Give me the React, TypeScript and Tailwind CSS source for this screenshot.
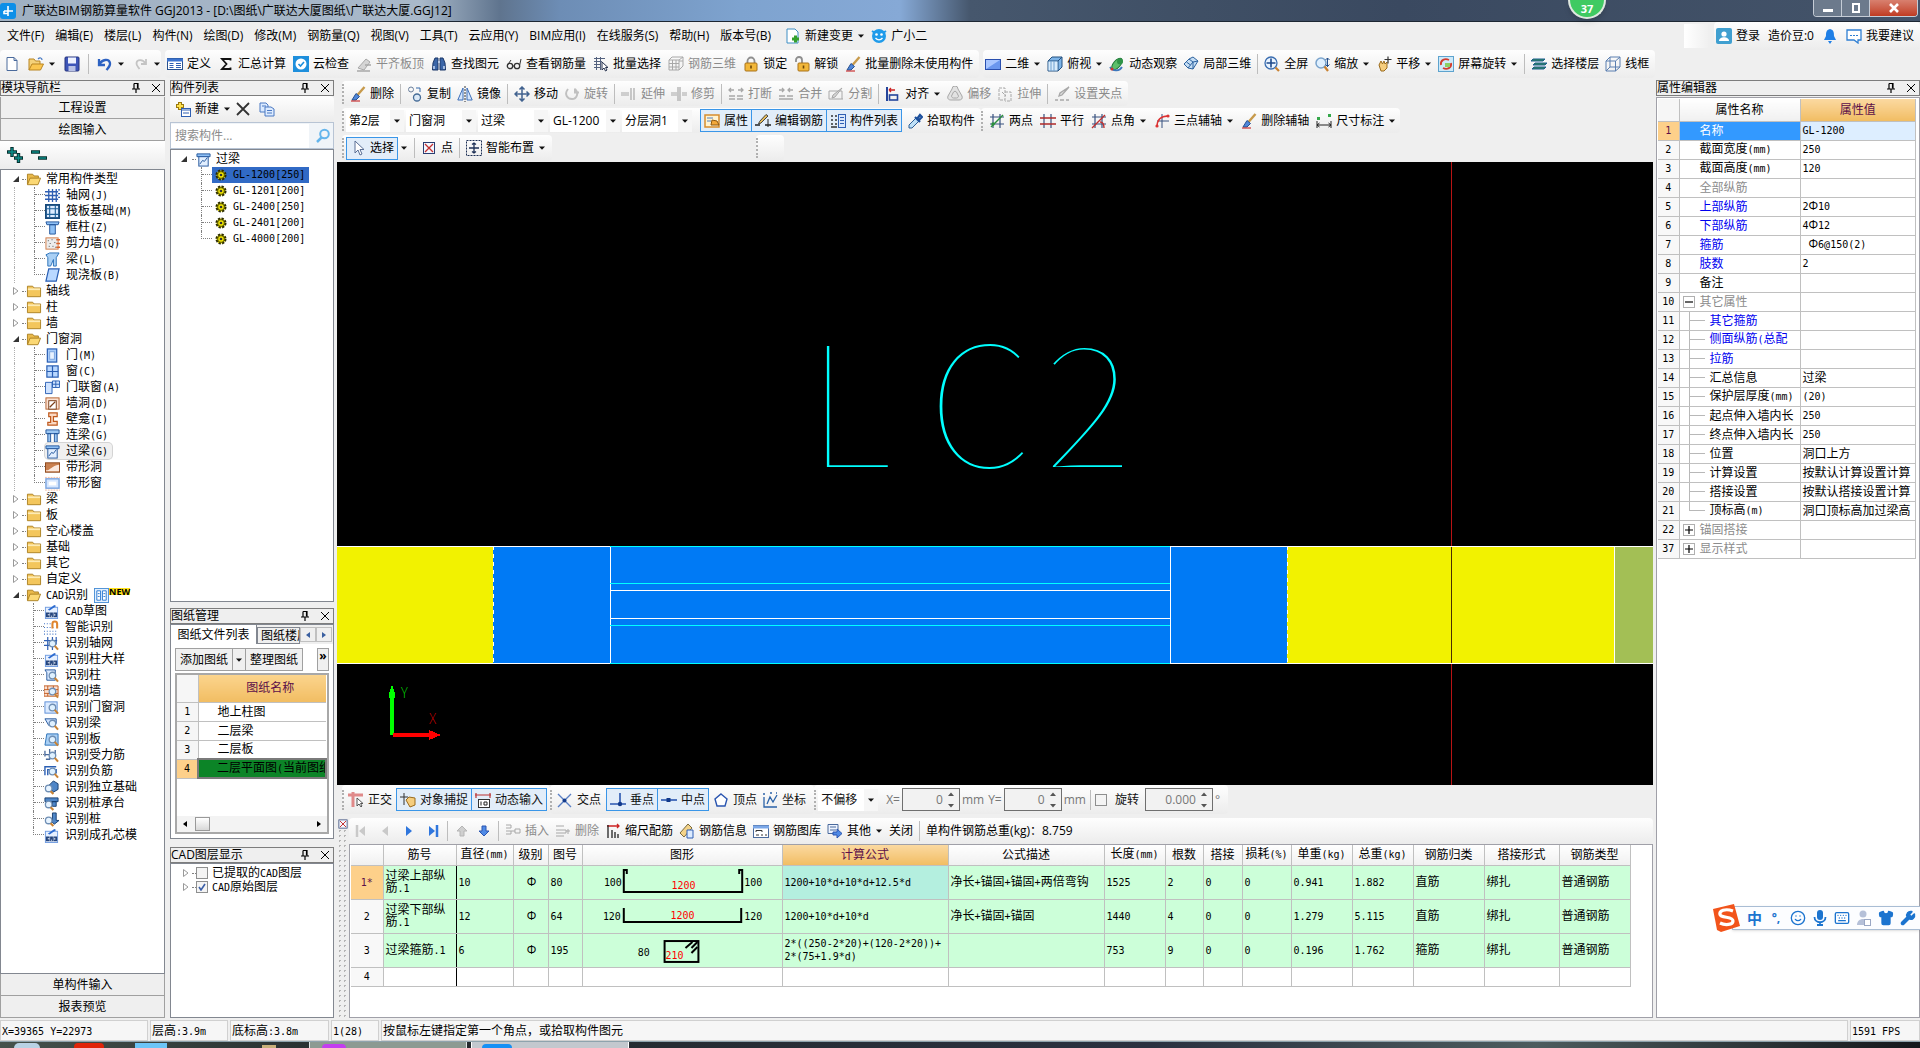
import type { ReactNode } from 'react';
import clsx from 'clsx';
import { Smile, Keyboard, Shirt, Wrench } from 'lucide-react';

const B = '#2f5fb3';
const G = '#a8a8a8';

const magnifier = (
  <>
    <circle cx="9" cy="8" r="3.5" fill="#dff1ff" stroke="#6f8fb5" strokeWidth="1.4" />
    <path d="M11.5 10.5l3.5 4" stroke="#c98232" strokeWidth="2.2" />
  </>
);
const brush = (
  <>
    <path d="M14.5 1L7.5 9" stroke="#c79a4b" strokeWidth="2.4" />
    <path d="M6 7.500l3.500 3L6 14H2z" fill="#4f86d8" stroke="#27508f" />
    <path d="M1 15h9" stroke="#c33" strokeWidth="1.2" />
  </>
);
const cadBadge = (
  <>
    <rect x="1.500" y="3.500" width="13" height="12" fill="#e6f0ff" stroke="#6f9be0" />
    <path d="M4 6l7-5 2 1-7 5z" fill="#2c6bd0" />
    <path d="M2 9h4v5H2zM6.500 9h3v5h-3zM10 9h4v5h-4z" fill="#24447c" />
    <path d="M4 11.500h2M7.500 13h1M11.500 10.500v2" stroke="#fff" />
  </>
);

// 16x16 drawings, keyed by command
const icons: Record<string, ReactNode> = {
  app: <><rect width="16" height="16" rx="3" fill="#0d8fe8" /><path d="M8 3v10M4 8h9M4 8v2.500h4" fill="none" stroke="#fff" strokeWidth="1.600" /></>,
  newdoc: <path d="M3 1.500h7l3 3v10H3zM10 1.500v3h3" fill="#fff" stroke="#4a6a9c" />,
  open: <><path d="M1 14V3h5l1.500 2H12v3" fill="#f5d27a" stroke="#b98522" /><path d="M1 14l3-6h11.500l-3 6z" fill="#fbc64f" stroke="#b98522" /><path d="M10 3c2-2 4-1 4 1" fill="none" stroke="#4b7cc4" strokeWidth="1.300" /></>,
  save: <><rect x="1" y="1" width="14" height="14" rx="1" fill="#3d55b8" stroke="#26357d" /><rect x="4" y="1.500" width="8" height="6" fill="#eef2ff" /><rect x="4.500" y="10" width="7" height="5" fill="#b9c2e6" /></>,
  undo: <path d="M2 3v6h6M2.500 8.500C5 3 12 2.500 13 7c.6 3-2 5-3.500 7" fill="none" stroke="#2d62c2" strokeWidth="2.300" />,
  redo: <path d="M13 3v5H8M12.500 7.500C10 3 4 3 3.500 7c-.3 3 2 4 3 6" fill="none" stroke="#c4c4c4" strokeWidth="1.800" />,
  define: <><rect x=".5" y="2.500" width="15" height="11" fill="#fff" stroke="#27508f" /><path d="M0 4h16" stroke="#3c73cf" strokeWidth="3" /><path d="M2.500 7.500h4M2.500 9.500h4M2.500 11.500h4M9 7.500h5M9 9.500h5M9 11.500h5" stroke={B} /></>,
  sigma: <path d="M12.500 4.500V3H4l4.500 5L4 13h8.500v-1.500" fill="none" stroke="#111" strokeWidth="1.800" />,
  cloud: <><rect width="16" height="16" fill="#1e8fdc" /><circle cx="8" cy="8" r="5.500" fill="#fff" /><path d="M5.500 8l2 2 3.500-4" fill="none" stroke="#1e8fdc" strokeWidth="1.600" /></>,
  levelTop: <><path d="M2 12l8-9 4 3-6 8z" fill="#d5d5d5" stroke={G} /><path d="M1 15h13M9 9h6" stroke={G} strokeWidth="1.500" /></>,
  find: <><path d="M2 7l2-5h3v12H1.500zM14 7l-2-5H9v12h5.500z" fill="#3b66a8" stroke="#1b3768" /><path d="M3 10v3M13 10v3M7 6h2" stroke="#c9dcf7" strokeWidth="1.500" /></>,
  glasses: <><circle cx="4" cy="10" r="2.700" fill="none" stroke="#333" strokeWidth="1.300" /><circle cx="11" cy="10" r="2.700" fill="none" stroke="#333" strokeWidth="1.300" /><path d="M6.500 10h2M1.500 9L5 4M13.700 9L15 3" stroke="#333" /></>,
  batch: <><path d="M1 2.500h11M1 5.500h8M1 8.500h7M1 11.500h7M3.500 1v13M7.500 1v13" stroke="#53617e" /><path d="M9 6v8l2-2 1.500 3 1.500-1-1.500-2.500H15z" fill="#fff" stroke="#26324e" /></>,
  rebar3d: <path d="M1 4h10v10H1zM4.500 4v10M8 4v10M1 7.500h10M1 11h10M1 4l3-3h11v9l-4 4M11 4l4-3M15 5H11" fill="none" stroke={G} />,
  lock: <><path d="M4.500 8V5a3.500 3.500 0 017 0v3" fill="none" stroke="#8e8e8e" strokeWidth="1.800" /><rect x="2" y="7" width="12" height="8" rx="1" fill="#f2b739" stroke="#a9731a" /><path d="M8 9.500v3" stroke="#6d4608" strokeWidth="1.600" /></>,
  unlock: <><path d="M2 6V4a3 3 0 016 0v4" fill="none" stroke="#8e8e8e" strokeWidth="1.800" /><rect x="4" y="7" width="11" height="8" rx="1" fill="#f2b739" stroke="#a9731a" /><path d="M9.500 9.500v3" stroke="#6d4608" strokeWidth="1.600" /></>,
  brush,
  flat: <><rect x=".5" y="3.500" width="15" height="10" fill="#a9c6ff" stroke="#2a4fae" /><path d="M1 13L15 4v9z" fill="#6b97ee" /></>,
  cube: <><path d="M1 5l4-4h10v10l-4 4H1z" fill="#7db4e8" stroke="#24507e" /><path d="M1 5h10v10M11 5l4-4" fill="none" stroke="#24507e" /><rect x="1.500" y="5.500" width="9" height="9" fill="#d9ecfc" /><path d="M4 5v10M7 5v10" stroke="#6fa0d0" /></>,
  orbit: <><ellipse cx="8" cy="8" rx="7" ry="3.500" transform="rotate(-50 8 8)" fill="#5cbf6a" stroke="#1c7436" /><circle cx="11" cy="5.500" r="3" fill="#2f9447" /><path d="M1 11c3 5 10 4 12 0" fill="none" stroke="#3c77bd" strokeWidth="1.700" /><circle cx="3" cy="13" r="1.600" fill="#c33" /></>,
  local3d: <path d="M1 8l5-5 4 3-5 6zM6 3l4-2 5 4-5 8-5-1M10 6l5-1M3.500 6l4 3M10 6v7" fill="#c5def5" stroke="#2d629e" />,
  full: <><circle cx="7" cy="7" r="6" fill="#eaf4ff" stroke="#3a6db0" strokeWidth="1.300" /><path d="M7 2.500v9M2.500 7h9" stroke="#1f4a8c" strokeWidth="1.600" /><path d="M11.500 11.500L15 15" stroke="#c98232" strokeWidth="2.200" /></>,
  zoom: <><circle cx="7" cy="7" r="5" fill="#dff0ff" stroke="#7aa3cc" strokeWidth="1.500" /><path d="M10.500 10.500L14 15" stroke="#c98232" strokeWidth="2.200" /><path d="M13.500 2v9M11.500 4l2-2 2 2M11.500 8.500l2 2 2-2" fill="none" stroke="#234f8c" /></>,
  pan: <><path d="M3 9l2-4 1.500 3L8 5l1 3 2-2v6l-3 3H5z" fill="#f5cd7e" stroke="#9a6a1c" /><path d="M12 .5v7M8.500 3.500h7" stroke="#333" strokeWidth="1.200" /></>,
  rotateView: <><rect x=".5" y=".5" width="15" height="15" fill="#cfe9f8" stroke="#5da3ce" /><path d="M3 9c-1-5 4-7 8-5M13 7c1 5-4 7-8 5" fill="none" stroke="#d33c2c" strokeWidth="1.800" /><rect x="7" y="7" width="5" height="4" fill="#8ccf63" /></>,
  floors: <><path d="M2 3h12l-2 2H0zM4 7h12l-2 2H2zM3 11h12l-2 2H1z" fill="#2f8a57" stroke="#1c5d91" /></>,
  wire: <path d="M1 5h9.500v10H1zM1 5l4-4h10v10l-4.500 4M10.500 5L15 1M5 1v10h10M5 11l-4 4" fill="none" stroke="#5a7eb0" />,
  copy: <><circle cx="4" cy="3.500" r="2.500" fill="none" stroke="#6a7f9c" /><circle cx="10" cy="11.500" r="3.500" fill="#dbe9f7" stroke="#456b96" strokeWidth="1.300" /><path d="M9 2h4v4" fill="none" stroke="#3568a8" /></>,
  mirror: <><path d="M6 2v12H.8zM10 2v12h5.200z" fill="#d3e5fb" stroke="#3d6eb8" /><path d="M8 0v16" stroke="#333" strokeDasharray="2 1" /></>,
  move: <path d="M8 1v14M1 8h14M5.500 3.500L8 1l2.500 2.500M5.500 12.500L8 15l2.500-2.500M3.500 5.500L1 8l2.500 2.500M12.500 5.500L15 8l-2.500 2.500" fill="none" stroke="#41628f" strokeWidth="1.500" />,
  rotate: <path d="M4 3c-4 5-1 10 4 10s7-6 3-10M11 2.500v4h4" fill="none" stroke="#c0c0c0" strokeWidth="2" />,
  extend: <path d="M0 7h8M0 9h8M10 2v12M13 2v12" stroke={G} strokeWidth="1.200" />,
  trim: <path d="M0 7h6M0 9h6M7 1v14M9 1v14M11 7h5M11 9h5" stroke={G} strokeWidth="1.200" />,
  breakAt: <path d="M1 4h5M3 2L1 4l2 2M10 4h5M13 2l2 2-2 2M1 10h6M9 10h6M1 13h6M9 13h6" fill="none" stroke={G} strokeWidth="1.300" />,
  merge: <path d="M1 4h5M4 2l2 2-2 2M10 4h5M12 2l-2 2 2 2M1 10h6M9 10h6M1 13h14" fill="none" stroke={G} strokeWidth="1.300" />,
  split: <><path d="M1 5h13M1 13h14M1 5v8M14 5v8" stroke={G} /><path d="M14 2L7 11l-3 1 1-3z" fill="#d6d6d6" stroke={G} /></>,
  align: <><path d="M2 1v14" stroke="#24459b" strokeWidth="2" /><path d="M4 4h6M4 4l2-2M4 4l2 2" stroke="#c22" fill="none" strokeWidth="1.300" /><rect x="4.500" y="9" width="8" height="5" fill="none" stroke="#24459b" strokeWidth="1.600" /></>,
  offset: <path d="M5 3a3 3 0 016 0l4 7c1 3-1 4-3 4H4c-2 0-4-1-3-4zM6.500 6a2 2 0 013 0l2 4c0 1-1 2-2 2h-3c-1 0-2-1-2-2z" fill="#e2e2e2" stroke={G} />,
  stretch: <path d="M2 2h6v12H2zM8 6h6v9H8M5 6l4 4" fill="none" stroke={G} strokeDasharray="3 1" />,
  grip: <path d="M15 1L8 9l-3 1 1-3zM1 14h3M6 14h4M12 14h3" fill="#ddd" stroke={G} strokeWidth="1.300" />,
  props: <><rect x="1" y="2" width="14" height="12" fill="#fff3d1" stroke="#d88d2e" strokeWidth="1.500" /><path d="M3 5h6M3 8h4" stroke="#557fc0" /><path d="M7 12l1-5 5 1 2 4z" fill="#f3a83b" stroke="#8e5710" /></>,
  pencil: <><path d="M0 12h5M10 12h6" stroke="#222" strokeWidth="1.500" /><path d="M13 3L6 10l-2.500 1 1-2.500L11 1.500z" fill="#e7bd5a" stroke="#444" /><path d="M13 6v8" stroke="#222" /></>,
  list: <><path d="M1 3h2M1 7h2M1 11h2M5 3h2M5 7h2M5 11h2M1 14h6" stroke="#333" strokeWidth="1.300" /><rect x="8.500" y="1.500" width="7" height="13" fill="#dbe8fb" stroke={B} /><path d="M10 4.500h4M10 7.500h4M10 10.500h4" stroke={B} /></>,
  picker: <><path d="M9 5l3 3-7 7H2v-3z" fill="#bfe0f7" stroke="#2d5f96" /><path d="M8 4l5 5M10 6l3-4 2 2-3 3" stroke="#1c4f9c" strokeWidth="2.200" fill="none" /></>,
  twoPoint: <><path d="M1 4h14M1 11h14M4 1v14M11 1v14" stroke="#37517f" strokeWidth="1.200" /><path d="M2 14L14 2" stroke="#2a8f3d" strokeWidth="1.500" /><circle cx="4" cy="11" r="1.700" fill="#2a8f3d" /></>,
  parallel: <><path d="M4 1v14M11 1v14" stroke="#37517f" strokeWidth="1.200" /><path d="M0 5h16M0 11h16" stroke="#b02a2a" strokeWidth="1.300" /></>,
  pointAngle: <><path d="M1 4h14M1 11h14M4 1v14M11 1v14" stroke="#37517f" strokeWidth="1.200" /><path d="M1 15L14 2M9 9c3 0 4 2 4 6" stroke="#c03030" fill="none" strokeWidth="1.400" /></>,
  threePoint: <><path d="M8 1v14M3 8h12" stroke="#37517f" /><path d="M3 14C3 7 7 3 14 3" fill="none" stroke="#d33" strokeWidth="1.500" /><circle cx="14" cy="3" r="1.600" fill="#d33" /><circle cx="3" cy="13" r="1.600" fill="#d33" /></>,
  dimension: <><path d="M1 8v7M15 8v7M1 12h14M3.500 10L1 12l2.500 2M12.500 10l2.500 2-2.500 2" fill="none" stroke="#222" /><path d="M1 4h3v3H1zM12 1h3v3h-3z" fill="#35a84a" /></>,
  cursor: <path d="M5 1v12l3-3 2 5 2-1-2-4.500h4z" fill="#fff" stroke="#5a6f95" />,
  point: <><rect x="2.500" y="2.500" width="11" height="11" fill="#f5f8ff" stroke="#2b3e72" /><path d="M4 4l8 8M12 4l-8 8" stroke="#c33030" strokeWidth="1.300" /></>,
  smart: <><rect x=".5" y=".5" width="15" height="15" fill="none" stroke="#1c2f55" strokeDasharray="2 1" /><path d="M8 3v10M3 8h10M6 4.500L8 3l2 1.500M6 11.500L8 13l2-1.500" fill="none" stroke="#1c2f55" strokeWidth="1.300" /></>,
  change: <><path d="M2 1h8l3 3v11H2z" fill="#fff" stroke="#3f8fc4" /><path d="M10.500 7.500v7M7 11h7" stroke="#33a02c" strokeWidth="3" /></>,
  robot: <><circle cx="8" cy="8" r="7" fill="#1f9bea" /><path d="M1 3l3 2M15 3l-3 2" stroke="#1f9bea" strokeWidth="2" /><circle cx="5.500" cy="6.500" r="1.300" fill="#fff" /><circle cx="10.500" cy="6.500" r="1.300" fill="#fff" /><path d="M4.500 10c2 2.500 5 2.500 7 0" fill="none" stroke="#fff" strokeWidth="1.300" /></>,
  user: <><rect width="16" height="16" rx="2" fill="#3f9fd0" /><circle cx="8" cy="6" r="2.600" fill="#fff" /><path d="M3 13c0-5 10-5 10 0z" fill="#fff" /></>,
  bell: <path d="M8 1c4 1 4 4 4 7l2 4H2l2-4c0-3 0-6 4-7zM6 13h4l-2 3z" fill="#1f7fe6" />,
  chat: <><path d="M1 2h14v10h-3v3l-4-3H1z" fill="#fff" stroke="#2f7fd3" strokeWidth="1.300" /><path d="M4 7.500h8" stroke="#2f7fd3" strokeDasharray="2 1" /></>,
  add: <><path d="M5 1v8M1 5h8" stroke="#9a7a10" strokeWidth="4" /><path d="M5 2v6M2 5h6" stroke="#ffe14d" strokeWidth="2" /><rect x="6.500" y="7.500" width="9" height="8" fill="#fff" stroke={B} /><path d="M7 9h8M8 12h6" stroke={B} /></>,
  del: <path d="M2 2l12 12M14 2L2 14" stroke="#333" strokeWidth="1.800" />,
  dup: <><path d="M1 2h6l2 2v7H1z" fill="#dcebff" stroke="#4b78c2" /><path d="M6 6h6l3 2v7H6z" fill="#dcebff" stroke="#4b78c2" /><path d="M8 9.500h5M8 12h5M3 5h4" stroke="#4b78c2" /></>,
  search: <><circle cx="9.500" cy="6" r="4.300" fill="none" stroke="#64b5ec" strokeWidth="2" /><path d="M6.500 9.500L2 14" stroke="#64b5ec" strokeWidth="2.500" /></>,
  plus2: <><path d="M5 0v10M0 5h10M11.500 6v10M7 11h9" stroke="#06302f" strokeWidth="3.400" /><path d="M5 1v8M1 5h8M11.500 7v8M8 11h7" stroke="#0b8a86" strokeWidth="1.600" /></>,
  minus2: <><path d="M0 5h9M7 11h9" stroke="#06302f" strokeWidth="3.400" /><path d="M1 5h7M8 11h7" stroke="#0b8a86" strokeWidth="1.600" /></>,
  folder: <><path d="M.5 14.500v-12h6l1.500 2h7.500v10z" fill="#f3c65c" stroke="#a77c1c" /><path d="M1 6h14" stroke="#fdebb5" strokeWidth="2" /></>,
  folderOpen: <><path d="M.5 14V2.500h6L8 4.500h5V7" fill="#e9b94a" stroke="#a77c1c" /><path d="M.5 14.500l3-7.500h12l-3 7.500z" fill="#fbd874" stroke="#a77c1c" /></>,
  axisNet: <path d="M0 4h14M0 8h14M0 12h14M4 1v14M8 1v14M12 1v14M14 2h2M14 6h2M14 10h2" stroke={B} strokeWidth="1.400" />,
  raft: <><rect x="1" y="1" width="14" height="14" fill="#dcebff" stroke="#174a7c" strokeWidth="2" /><path d="M5 1v14M11 1v14M1 5h14M1 11h14" stroke="#1e6098" strokeWidth="1.200" /></>,
  column: <path d="M1 2h14l-1 3H2zM5 5h6v10H5z" fill="#8ec0f5" stroke="#22559c" />,
  shear: <><rect x="1" y="2" width="13" height="12" fill="#ececec" stroke="#d07a45" /><path d="M3 5h1M7 4h1M5 8h1M10 7h1M4 11h1M8 11h1M11 12h1" stroke="#444" /><path d="M12 4h4M12 8h4M12 12h4" stroke="#d9622a" strokeWidth="1.500" /></>,
  beam: <path d="M1 3l4-2h10l-3 5v9H9V8l-3 7H3V6z" fill="#a9d0f5" stroke="#2a70b8" />,
  slab: <path d="M4 1h11l-3 13H1z" fill="#b9d8ff" stroke="#2a5fb4" strokeWidth="1.300" />,
  door: <><rect x="2.500" y="1" width="10" height="14" fill="#a9cdfa" stroke="#2a5fb4" strokeWidth="1.300" /><rect x="5" y="4" width="5" height="8" fill="#e8f2ff" stroke="#7ba4df" /></>,
  window: <><rect x="2" y="2" width="12" height="12" fill="#b9d8ff" stroke="#2a5fb4" strokeWidth="1.300" /><path d="M8 2v12M2 8h12" stroke="#2a5fb4" strokeWidth="1.300" /></>,
  doorWindow: <path d="M.5 2.500h7v12h-7zM8 1h7.500v7H8zM11.500 1v7M8 4.500h7.500" fill="#cfe3ff" stroke="#2a5fb4" />,
  hole: <><rect x="1" y="2" width="14" height="12" fill="#fbe1d2" stroke="#b3602d" /><rect x="4" y="5" width="8" height="9" fill="#fff" stroke="#7a3c16" /><path d="M5 12l6-6" stroke="#7a3c16" strokeWidth="1.400" /></>,
  niche: <path d="M4 1h9v4H9v5h4v4H3v-3h3V5H4z" fill="#fbd9c4" stroke="#c05a1e" strokeWidth="1.300" />,
  link: <path d="M1 2h14v4H1zM3 6h3v9H3zM10 6h3v9h-3z" fill="#9cc7f3" stroke="#22559c" />,
  lintel: <><path d="M1 2h14v3H1z" fill="#8ec0f5" stroke="#22559c" /><rect x="3" y="5" width="10" height="10" fill="#e2efff" stroke="#22559c" /><path d="M4 13l3-4 2 1 3-4" fill="none" stroke="#22559c" /></>,
  stripHole: <><rect x=".5" y="3" width="15" height="10" fill="#c9804f" stroke="#8a4316" /><path d="M1 11c5 0 6-5 14-6v7H1z" fill="#fbe9de" /></>,
  stripWin: <><rect x="1" y="3" width="14" height="10" fill="#d5e6ff" stroke="#7ba4df" strokeWidth="1.500" /><rect x="4" y="6" width="8" height="4" fill="#fff" /><path d="M0 1.500h16M0 15h16" stroke="#f0b9a0" strokeDasharray="2 1" /></>,
  cad: cadBadge,
  magnet: <><path d="M0 4h8M0 8h12M0 12h14M0 15h14" stroke="#3b6fc4" strokeDasharray="1 2" strokeWidth="1.300" /><path d="M9 9V4a2.500 2.500 0 015 0v5" fill="none" stroke="#e0862e" strokeWidth="2.200" /></>,
  idAxis: <><path d="M0 5h14M0 10h12M4 1v14M9 1v14M13 1v8" stroke={B} strokeWidth="1.300" />{magnifier}</>,
  idCol: <><path d="M1 2h11v11H3V5z" fill="#dcebff" stroke="#22559c" />{magnifier}</>,
  idWall: <><path d="M0 2h15v11H0zM0 6h15M0 10h15M4 2v4M10 2v4M4 10v3" fill="#fbe1d2" stroke="#c05a1e" />{magnifier}</>,
  idDoor: <><rect x="1" y="2" width="13" height="12" fill="#dcebff" stroke="#5a8bd6" />{magnifier}</>,
  idBeam: <><path d="M1 3h12v5L5 10z" fill="#cfe3ff" stroke="#22559c" />{magnifier}</>,
  idSlab: <><path d="M3 2h12v12H1z" fill="#a9d0f5" stroke="#2a70b8" />{magnifier}</>,
  idRebar: <><path d="M1 7h11M1 3v6M12 2v6M6 1v11H2" fill="none" stroke="#4a6a9c" strokeWidth="1.400" />{magnifier}</>,
  idNeg: <><path d="M1 12V3h12M4 12V6h9v4" fill="none" stroke="#2a5fb4" strokeWidth="1.500" />{magnifier}</>,
  idFound: <><path d="M5 6l5-5 5 3v6l-5 3z" fill="#4f86c8" stroke="#173f70" /><circle cx="5" cy="9" r="3.500" fill="#e8f4ff" stroke="#6f8fb5" strokeWidth="1.400" /><path d="M7 12l3 3" stroke="#c98232" strokeWidth="2.200" /></>,
  idCap: <><path d="M1 2h14v4H1zM9 6h4v5H9z" fill="#4f86c8" stroke="#173f70" /><circle cx="5" cy="9" r="3.500" fill="#e8f4ff" stroke="#6f8fb5" strokeWidth="1.400" /><path d="M7 12l3 3" stroke="#c98232" strokeWidth="2.200" /></>,
  idPile: <><path d="M9 1h4v8h3l-5 4-4-4h2z" fill="#4f86c8" stroke="#173f70" /><circle cx="5" cy="9" r="3.500" fill="#e8f4ff" stroke="#6f8fb5" strokeWidth="1.400" /><path d="M7 12l3 3" stroke="#c98232" strokeWidth="2.200" /></>,
  gear: <><circle cx="8" cy="8" r="6" fill="#f5e900" stroke="#2b2b00" strokeWidth="2.800" strokeDasharray="3 1.700" /><circle cx="8" cy="8" r="4.500" fill="#f5e900" stroke="#2b2b00" /><circle cx="8" cy="8" r="1.800" fill="#333" /></>,
  ortho: <><path d="M0 3h15M5 0v15" stroke="#e08a8a" strokeWidth="3" /><path d="M9 6v8l2-2 2 3 1-1-1.500-2.500H15z" fill="#fff" stroke="#555" /></>,
  snap: <><path d="M0 5h8M4 1v12" stroke="#333" /><path d="M6 8l3-3 6 1v7l-5 2z" fill="#f5cd7e" stroke="#9a6a1c" /></>,
  dynInput: <><path d="M0 3h16M1 1v5M15 1v5" stroke="#b33" strokeWidth="1.200" /><rect x="3.500" y="7.500" width="11" height="8" fill="#fff" stroke="#333" /><path d="M6 9.500v4M9 10h3v3H9z" fill="none" stroke="#222" /></>,
  cross: <><path d="M1 2l13 13M14 2L1 15" stroke="#5a7fc4" strokeWidth="1.400" /><circle cx="7.500" cy="8.500" r="2" fill="#123a8c" /></>,
  perp: <><path d="M0 12h16M10 1v11" stroke="#2a55b0" strokeWidth="1.600" /><circle cx="10" cy="12" r="2.200" fill="#123a8c" /></>,
  mid: <><path d="M0 8h16" stroke="#2a55b0" strokeWidth="1.600" /><rect x="5.500" y="6" width="4" height="4" fill="#123a8c" /></>,
  vertex: <path d="M8 2l6 5-2 7H4L2 7z" fill="#fff" stroke="#2a55b0" strokeWidth="1.400" />,
  coord: <path d="M2 5v10h13M5 12l3-7 3 5 4-7M1 2h2M8 1h2M14 1h1" fill="none" stroke="#2a62a8" strokeWidth="1.300" />,
  last: <><path d="M4 3l6 5-6 5z" fill="#2f76dd" /><path d="M12 2v12" stroke="#2f76dd" strokeWidth="2.500" /></>,
  firstG: <><path d="M12 3L6 8l6 5z" fill="#c9c9c9" /><path d="M4 2v12" stroke="#c9c9c9" strokeWidth="2.500" /></>,
  prevG: <path d="M11 3L5 8l6 5z" fill="#c9c9c9" />,
  next: <path d="M5 3l6 5-6 5z" fill="#2f76dd" />,
  upG: <path d="M8 3l5 5h-3v5H6V8H3z" fill="#cfcfcf" stroke="#b5b5b5" />,
  down: <path d="M8 13l5-5h-3V3H6v5H3z" fill="#4f8ae6" stroke="#2a55b0" />,
  insert: <path d="M1 2h5v3H1M1 8h5v3H1M6 8h4M10 6h5v4h-5z" fill="none" stroke={G} />,
  remove: <path d="M1 3h8M1 7h10v3H1M1 13h8M11 8h4M13 6v5" fill="none" stroke={G} />,
  scaleBar: <><path d="M2 3h12M12 1l2 2-2 2" fill="none" stroke="#c22" strokeWidth="1.300" /><path d="M3 2v13M7 7v8M10 9v6M13 11v4" stroke="#222" strokeWidth="1.300" /></>,
  info: <><path d="M1 10L9 1l4 4-8 9z" fill="#f3d38a" stroke="#7a6a3c" /><path d="M8 7h6v8H8z" fill="#dcebff" stroke={B} /></>,
  library: <><rect x=".5" y="2.500" width="15" height="12" fill="#fff" stroke="#4a6a9c" /><path d="M0 4h16" stroke="#7aa7e8" strokeWidth="3" /><path d="M3 9V7.500h6V9M3 12h3M8 12h2M12 12h2" fill="none" stroke="#333" /></>,
  other: <><path d="M1 1.500h10v9H1zM3 4h6M3 7h6" fill="#eef4ff" stroke="#4a6a9c" /><path d="M6 9h4V6l5 4.500-5 4.500v-3H6z" fill="#4f8ae6" stroke="#2a55b0" /></>,
};

function Icon({ name, className = 'size-4' }: { name: string; className?: string }) {
  return (
    <svg viewBox="0 0 16 16" className={clsx('shrink-0', className)} aria-hidden="true">
      {icons[name]}
    </svg>
  );
}

const Caret = () => (
  <svg viewBox="0 0 8 8" className="size-2 shrink-0" aria-hidden="true">
    <path d="M1 2.500h6L4 5.800z" fill="#111" />
  </svg>
);

const Sep = () => <span className="h-5 w-px shrink-0 bg-[#bdbdbd]" />;
const Grip = () => <span className="h-5 w-0 shrink-0 border-l-2 border-dotted border-[#b0b0b0]" />;

// Latin runs are set in a half-width mono face, next to full-width CJK
function Mixed({ text }: { text: string }) {
  return (
    <>
      {text.split(/([\x20-\x7e]+)/).map((part, i) =>
        i % 2 ? (
          <span key={i} className="font-['DejaVu_Sans_Mono',monospace] text-[10px]">{part}</span>
        ) : (
          part
        )
      )}
    </>
  );
}

interface ToolProps {
  icon: string;
  label?: string;
  menu?: boolean;
  disabled?: boolean;
  active?: boolean;
}

function Tool({ icon, label, menu, disabled, active }: ToolProps) {
  return (
    <button
      disabled={disabled}
      aria-label={label ?? icon}
      className={clsx(
        'flex shrink-0 items-center gap-1 whitespace-nowrap',
        disabled && 'text-[#8b8b8b]',
        active && 'h-[23px] border border-[#3a96e8] bg-[#e2edf9] px-[3px]'
      )}
    >
      <Icon name={icon} />
      {label && <span>{label}</span>}
      {menu && <Caret />}
    </button>
  );
}

const Bar = ({ className, children }: { className?: string; children: ReactNode }) => (
  <div className={clsx('flex shrink-0 items-center self-stretch rounded-sm bg-linear-to-b from-[#fefefe] to-[#ececec]', className)}>
    {children}
  </div>
);

function Combo({ value, label, className }: { value: string; label: string; className: string }) {
  return (
    <div className={clsx('flex h-[22px] shrink-0 items-center bg-white pl-[3px]', className)}>
      <select aria-label={label} className="min-w-0 flex-1 appearance-none bg-transparent">
        <option>{value}</option>
      </select>
      <span className="flex h-full w-[14px] items-center justify-center bg-[#f6f6f6]">
        <Caret />
      </span>
    </div>
  );
}

function Spin({ label, value, className }: { label: string; value: string; className: string }) {
  return (
    <span className={clsx('flex h-[23px] items-center border border-[#6f6f6f] bg-[#f2f2f2]', className)}>
      <input aria-label={label} defaultValue={value} className="w-0 min-w-0 flex-1 bg-transparent text-right text-[#777]" />
      <svg viewBox="0 0 16 20" className="h-5 w-4" aria-hidden="true">
        <path d="M5 6h6L8 2.500zM5 14h6l-3 3.500z" fill="#555" />
      </svg>
    </span>
  );
}

function PanelTitle({ title }: { title: string }) {
  return (
    <div className="flex h-4 shrink-0 items-center border border-[#7d7d7d] bg-[#efefef] pr-1">
      <h2 className="flex-1 leading-[14px]">{title}</h2>
      <button aria-label="固定" className="mr-3">
        <svg viewBox="0 0 8 10" className="h-[10px] w-2"><path d="M2 .5h4v5M2 .5v5M5.500 0v5M0 6h8M4 6v4" fill="none" stroke="#000" strokeWidth="1.200" /></svg>
      </button>
      <button aria-label="关闭">
        <svg viewBox="0 0 8 8" className="size-2"><path d="M0 0l8 8M8 0L0 8" stroke="#000" /></svg>
      </button>
    </div>
  );
}

const menus = ['文件(F)', '编辑(E)', '楼层(L)', '构件(N)', '绘图(D)', '修改(M)', '钢筋量(Q)', '视图(V)', '工具(T)', '云应用(Y)', 'BIM应用(I)', '在线服务(S)', '帮助(H)', '版本号(B)'];

interface TreeGroup {
  name: string;
  open?: boolean;
  items?: [string, string][];
}

const tree: TreeGroup[] = [
  {
    name: '常用构件类型',
    open: true,
    items: [['axisNet', '轴网(J)'], ['raft', '筏板基础(M)'], ['column', '框柱(Z)'], ['shear', '剪力墙(Q)'], ['beam', '梁(L)'], ['slab', '现浇板(B)']],
  },
  { name: '轴线' },
  { name: '柱' },
  { name: '墙' },
  {
    name: '门窗洞',
    open: true,
    items: [['door', '门(M)'], ['window', '窗(C)'], ['doorWindow', '门联窗(A)'], ['hole', '墙洞(D)'], ['niche', '壁龛(I)'], ['link', '连梁(G)'], ['lintel', '过梁(G)'], ['stripHole', '带形洞'], ['stripWin', '带形窗']],
  },
  { name: '梁' },
  { name: '板' },
  { name: '空心楼盖' },
  { name: '基础' },
  { name: '其它' },
  { name: '自定义' },
  {
    name: 'CAD识别',
    open: true,
    items: [['cad', 'CAD草图'], ['magnet', '智能识别'], ['idAxis', '识别轴网'], ['cad', '识别柱大样'], ['idCol', '识别柱'], ['idWall', '识别墙'], ['idDoor', '识别门窗洞'], ['idBeam', '识别梁'], ['idSlab', '识别板'], ['idRebar', '识别受力筋'], ['idNeg', '识别负筋'], ['idFound', '识别独立基础'], ['idCap', '识别桩承台'], ['idPile', '识别桩'], ['cad', '识别成孔芯模']],
  },
];

const Expander = ({ open }: { open?: boolean }) => (
  <svg viewBox="0 0 8 8" className="size-2 shrink-0" aria-hidden="true">
    {open ? <path d="M7 1v6H1z" fill="#333" /> : <path d="M1.500 .5v7L6 4z" fill="#fff" stroke="#999" />}
  </svg>
);

const Branch = ({ last }: { last: boolean }) => (
  <span className={clsx('flex h-full w-[11px] shrink-0 flex-col border-dotted border-[#808080]', !last && 'border-l')}>
    <span className={clsx('h-1/2 border-b border-dotted border-[#808080]', last && 'border-l')} />
  </span>
);

function NavTree() {
  return (
    <ul className="min-h-0 flex-1 overflow-hidden border border-[#828790] bg-white pt-px">
      {tree.map((group, g) => (
        <li key={group.name}>
          <div className="flex h-4 items-center pl-[11px]">
            <Expander open={group.open} />
            <span className="ml-0.5 w-1 border-b border-dotted border-[#808080]" />
            <Icon name={group.open ? 'folderOpen' : 'folder'} className="h-[14px] w-4" />
            <button className="ml-1 whitespace-nowrap leading-4"><Mixed text={group.name} /></button>
            {group.name === 'CAD识别' && (
              <>
                <svg viewBox="0 0 16 16" className="ml-1.5 size-[15px]" aria-hidden="true">
                  <rect x=".5" y=".5" width="15" height="15" fill="#e4f1ff" stroke="#4a8fd6" />
                  <path d="M3 3h4v10H3zM9 3h4v10H9zM4 6h2M4 9h2M10 6h2M10 9h2" fill="#fff" stroke="#2a78d0" />
                </svg>
                <span className="mb-2 bg-[#ffe11a] text-[9px] leading-[7px] font-bold">NEW</span>
              </>
            )}
          </div>
          {group.items?.map(([icon, name], i) => (
            <div key={name} className={clsx('ml-[13px] flex h-4 items-center pl-[19px]', g < tree.length - 1 && 'border-l border-dotted border-[#b0b0b0]')}>
              <Branch last={i === group.items!.length - 1} />
              <button className={clsx('flex h-4 items-center gap-1.5 whitespace-nowrap pr-1 leading-4', name === '过梁(G)' && 'rounded-sm bg-[#f0f0f0] ring-1 ring-[#d4d4d4]')}>
                <Icon name={icon} className="size-[15px]" />
                <span><Mixed text={name} /></span>
              </button>
            </div>
          ))}
        </li>
      ))}
    </ul>
  );
}

const NavButton = ({ children }: { children: ReactNode }) => (
  <button className="h-[22px] shrink-0 border border-t-0 border-[#a0a0a0] bg-[#efefef] leading-5">{children}</button>
);

function NavPanel() {
  return (
    <nav className="flex w-[165px] shrink-0 flex-col">
      <PanelTitle title="模块导航栏" />
      <div className="h-px shrink-0" />
      <NavButton>工程设置</NavButton>
      <NavButton>绘图输入</NavButton>
      <div className="flex h-7 shrink-0 items-center gap-2 bg-linear-to-b from-white to-[#ececec] pl-[7px]">
        <Tool icon="plus2" />
        <Tool icon="minus2" />
      </div>
      <NavTree />
      <NavButton>单构件输入</NavButton>
      <NavButton>报表预览</NavButton>
    </nav>
  );
}

const components = ['GL-1200[250]', 'GL-1201[200]', 'GL-2400[250]', 'GL-2401[200]', 'GL-4000[200]'];
const sheets = ['地上柱图', '二层梁', '二层板', '二层平面图(当前图纸)'];

function ComponentPanels() {
  return (
    <div className="flex w-[164px] shrink-0 flex-col">
      <PanelTitle title="构件列表" />
      <Bar className="h-[26px] gap-1 self-auto pl-[5px]">
        <Tool icon="add" label="新建" menu />
        <Tool icon="del" />
        <span className="ml-1"><Tool icon="dup" /></span>
      </Bar>
      <div className="flex h-[27px] shrink-0 items-center border border-[#b8c4d4] bg-[#f0f4f8]">
        <input aria-label="搜索构件" placeholder="搜索构件..." className="h-6 w-[138px] bg-white px-1 placeholder:text-[#8c8c8c]" />
        <button aria-label="搜索" className="ml-1.5"><Icon name="search" /></button>
      </div>
      <ul className="h-[453px] border border-[#828790] bg-white pt-px">
        <li className="flex h-4 items-center pl-[9px] leading-4">
          <Expander open />
          <span className="ml-1 w-1 border-b border-dotted border-[#808080]" />
          <Icon name="lintel" className="size-[15px]" />
          <span className="ml-[5px]">过梁</span>
        </li>
        {components.map((name, i) => (
          <li key={name} className="flex h-4 items-center pl-[30px]">
            <Branch last={i === components.length - 1} />
            <button className={clsx('flex h-4 w-[97px] items-center gap-1.5 pl-[3px] leading-4', i === 0 && 'bg-[#316ac5]')}>
              <Icon name="gear" className="size-3" />
              <span className="font-['DejaVu_Sans_Mono',monospace] text-[10px] whitespace-nowrap">{name}</span>
            </button>
          </li>
        ))}
      </ul>

      <div className="h-1.5 shrink-0" />
      <PanelTitle title="图纸管理" />
      <div className="flex h-[215px] shrink-0 flex-col border border-[#828790] bg-[#efefef]">
        <div role="tablist" className="flex h-[19px] shrink-0 items-end overflow-hidden">
          <button role="tab" aria-selected="true" className="h-full w-[86px] shrink-0 border-r border-[#828790] bg-white">图纸文件列表</button>
          <button role="tab" aria-selected="false" className="h-[17px] w-[43px] shrink-0 overflow-hidden whitespace-nowrap border border-[#828790] pl-[3px] text-left leading-4">图纸楼层</button>
          <button aria-label="向左" className="flex h-[15px] w-4 items-center justify-center self-center border border-[#c0c0c0]">
            <svg viewBox="0 0 4 6" className="h-1.5 w-1"><path d="M4 0v6L0 3z" fill="#3a5fa0" /></svg>
          </button>
          <button aria-label="向右" className="flex h-[15px] w-4 items-center justify-center self-center border border-[#c0c0c0]">
            <svg viewBox="0 0 4 6" className="h-1.5 w-1"><path d="M0 0v6l4-3z" fill="#3a5fa0" /></svg>
          </button>
        </div>
        <div className="flex min-h-0 flex-1 flex-col bg-white px-1 py-1">
          <div className="flex h-[23px] shrink-0">
            <button className="w-[58px] border border-[#a0a0a0] bg-[#f0f0f0]">添加图纸</button>
            <button aria-label="更多添加方式" className="flex w-[13px] items-center justify-center border border-l-0 border-[#a0a0a0] bg-[#f0f0f0]"><Caret /></button>
            <button className="w-[57px] border border-l-0 border-[#a0a0a0] bg-[#f0f0f0]">整理图纸</button>
            <button className="ml-auto w-3 border border-[#a0a0a0] bg-[#f0f0f0] pb-2 leading-3 font-bold">»</button>
          </div>
          <div className="mt-0.5 flex min-h-0 flex-1 flex-col overflow-hidden border-2 border-[#a8a8a8]">
            <table className="w-full table-fixed border-collapse">
              <thead>
                <tr className="h-[27px]">
                  <th className="w-[21px] border-r border-b border-[#c0c0c0] bg-[#f6f6f6]" />
                  <th className="border-b border-[#c0c0c0] bg-linear-to-b from-[#fbd48c] to-[#f1bd62] pl-4 font-normal text-[#5c1049]">图纸名称</th>
                </tr>
              </thead>
              <tbody>
                {sheets.map((name, i) => {
                  const current = i === 3;
                  return (
                    <tr key={name} className="h-[19px]">
                      <td className={clsx("border-r border-b border-[#c0c0c0] text-center font-['DejaVu_Sans_Mono',monospace] text-[10px]", current ? 'bg-[#fdd08a]' : 'bg-[#f6f6f6]')}>{i + 1}</td>
                      <td className={clsx('overflow-hidden whitespace-nowrap leading-4', current ? 'border-2 border-[#7a7a7a] bg-[#0c8427] pl-[18px]' : 'border-b border-[#c0c0c0] pl-[19px]')}><Mixed text={name} /></td>
                    </tr>
                  );
                })}
              </tbody>
            </table>
            <div className="mt-auto flex h-4 shrink-0 items-center bg-[#f3f3f3] px-1.5">
              <svg viewBox="0 0 4 6" className="h-1.5 w-1"><path d="M4 0v6L0 3z" /></svg>
              <span className="ml-2 h-[14px] w-[15px] border border-[#999] bg-linear-to-b from-white to-[#d8d8d8]" />
              <svg viewBox="0 0 4 6" className="ml-auto h-1.5 w-1"><path d="M0 0v6l4-3z" /></svg>
            </div>
          </div>
        </div>
      </div>

      <div className="h-2 shrink-0" />
      <PanelTitle title="CAD图层显示" />
      <ul className="min-h-0 flex-1 border border-[#828790] bg-white pt-0.5">
        {['已提取的CAD图层', 'CAD原始图层'].map((name, i) => (
          <li key={name} className="flex h-[14px] items-center pl-[11px]">
            <Expander />
            <span className="ml-0.5 w-1 border-b border-dotted border-[#808080]" />
            <label className="flex items-center whitespace-nowrap leading-[14px]">
              <input type="checkbox" defaultChecked={i === 1} className="peer sr-only" />
              <span className="mr-1 flex size-3 items-center justify-center border border-[#8e8f8f] bg-[#f4f4f4] text-transparent peer-checked:text-[#3b5fa8]">
                <svg viewBox="0 0 8 8" className="size-2"><path d="M1 4l2 3 4-6" fill="none" stroke="currentColor" strokeWidth="1.600" /></svg>
              </span>
              <span><Mixed text={name} /></span>
            </label>
          </li>
        ))}
      </ul>
    </div>
  );
}

// Plan view of the wall segment with the window opening LC2
function Canvas() {
  return (
    <div className="min-h-0 flex-1 bg-black">
      <svg viewBox="0 0 1316 623" preserveAspectRatio="xMinYMin slice" className="size-full" shapeRendering="crispEdges">
        <rect x="0" y="384" width="156" height="118" fill="#f2f200" />
        <rect x="156" y="384" width="794" height="118" fill="#007af5" />
        <rect x="950" y="384" width="327" height="118" fill="#f2f200" />
        <rect x="1277" y="384" width="39" height="118" fill="#a3bf55" />
        <path d="M0 384.500h273M833 384.500h483M0 501.500h273M833 501.500h483M273.500 384v118M833.500 384v118M273 428.500h560M273 456.500h560M1277.500 384v118" stroke="#fff" />
        <path d="M273 384.500h560M273 501.500h560M273 421.500h560M273 463.500h560" stroke="#0ff" />
        <path d="M156.500 384v118M950.500 384v118" stroke="#fff" strokeDasharray="4 4" />
        <path d="M1114.500 0v384M1114.500 502v121" stroke="#b81414" />
        <path d="M1114.500 385v116" stroke="#4a3000" />
        {/* the black stroke thins the letters down to plotter lines */}
        <g fill="#0ff" stroke="#000" strokeWidth="4" fontFamily="'Noto Sans CJK SC', sans-serif" fontWeight="100" fontSize="172">
          <text x="469" y="307">L</text>
          <text x="590" y="307">C</text>
          <text x="706" y="307">2</text>
        </g>
        <path d="M53 573v-37h-1v-5l3-8 3 8v5h-1v37z" fill="#0f0" />
        <path d="M56 571h36v-3l12 5-12 5v-3H56z" fill="#f00" />
        <text x="64" y="536" fill="#0f0" fontFamily="'Noto Sans CJK SC', sans-serif" fontWeight="100" fontSize="14">Y</text>
        <text x="92" y="562" fill="#f00" fontFamily="'Noto Sans CJK SC', sans-serif" fontWeight="100" fontSize="14">X</text>
      </svg>
    </div>
  );
}

function DrawToolbars() {
  return (
    <>
      <div className="flex h-[27px] shrink-0 py-px pl-[5px]">
        <Bar className="gap-1.5 pr-1.5">
          <div className="flex items-center gap-1.5"><Grip /><Tool icon="brush" label="删除" /></div>
          <Sep />
          <Tool icon="copy" label="复制" />
          <Tool icon="mirror" label="镜像" />
          <Sep />
          <Tool icon="move" label="移动" />
          <Tool icon="rotate" label="旋转" disabled />
          <Sep />
          <Tool icon="extend" label="延伸" disabled />
          <Tool icon="trim" label="修剪" disabled />
          <Sep />
          <Tool icon="breakAt" label="打断" disabled />
          <Tool icon="merge" label="合并" disabled />
          <Tool icon="split" label="分割" disabled />
          <Sep />
          <Tool icon="align" label="对齐" menu />
          <Tool icon="offset" label="偏移" disabled />
          <Tool icon="stretch" label="拉伸" disabled />
          <Sep />
          <Tool icon="grip" label="设置夹点" disabled />
        </Bar>
      </div>
      <div className="flex h-[27px] shrink-0 py-px pl-[5px]">
        <Bar className="gap-0.5 pr-1.5">
          <Grip />
          <Combo label="楼层" value="第2层" className="w-[58px]" />
          <Combo label="构件大类" value="门窗洞" className="w-[70px]" />
          <Combo label="构件类型" value="过梁" className="w-[70px]" />
          <Combo label="构件" value="GL-1200" className="w-[70px]" />
          <Combo label="分层" value="分层洞1" className="w-[70px]" />
          <span className="mx-0.5"><Sep /></span>
          <div className="flex *:-mr-px">
            <Tool icon="props" label="属性" active />
            <Tool icon="pencil" label="编辑钢筋" active />
            <Tool icon="list" label="构件列表" active />
          </div>
          <span className="ml-1"><Tool icon="picker" label="拾取构件" /></span>
        </Bar>
        <Bar className="gap-[7px] pr-1">
          <div className="flex items-center gap-1.5"><Grip /><Tool icon="twoPoint" label="两点" /></div>
          <Tool icon="parallel" label="平行" />
          <Tool icon="pointAngle" label="点角" menu />
          <Tool icon="threePoint" label="三点辅轴" menu />
          <Tool icon="brush" label="删除辅轴" />
          <Tool icon="dimension" label="尺寸标注" menu />
        </Bar>
      </div>
      <div className="flex h-[28px] shrink-0 py-px pl-[5px]">
        <Bar className="gap-1.5 pr-1.5">
          <Grip />
          <div className="-ml-1 flex items-center gap-0.5">
            <Tool icon="cursor" label="选择" active />
            <Caret />
          </div>
          <Sep />
          <Tool icon="point" label="点" />
          <Sep />
          <Tool icon="smart" label="智能布置" menu />
        </Bar>
        <Bar className="ml-[204px] w-7"><Grip /></Bar>
      </div>
    </>
  );
}

function SnapToolbar() {
  return (
    <div className="flex h-[33px] shrink-0 pb-1 pl-[5px] text-[#111]">
      <Bar className="gap-1 pr-1">
        <Grip />
        <Tool icon="ortho" label="正交" />
        <div className="flex *:-mr-px">
          <Tool icon="snap" label="对象捕捉" active />
          <Tool icon="dynInput" label="动态输入" active />
        </div>
      </Bar>
      <Bar className="gap-[5px] pr-2">
        <Grip />
        <Tool icon="cross" label="交点" />
        <div className="flex *:-mr-px">
          <Tool icon="perp" label="垂点" active />
          <Tool icon="mid" label="中点" active />
        </div>
        <Tool icon="vertex" label="顶点" />
        <Tool icon="coord" label="坐标" />
      </Bar>
      <Bar className="gap-0.5 pr-2 text-[#777]">
        <Grip />
        <span className="text-[#111]"><Combo label="偏移方式" value="不偏移" className="w-[60px]" /></span>
        <span className="mx-0.5"><Sep /></span>
        <span>X=</span>
        <Spin label="X" value="0" className="w-[58px]" />
        <span className="mr-0.5">mm</span>
        <span>Y=</span>
        <Spin label="Y" value="0" className="w-[58px]" />
        <span className="mr-0.5">mm</span>
        <Sep />
        <label className="mr-1 flex items-center gap-2 text-[#111]">
          <input type="checkbox" className="ml-0.5 size-3 appearance-none border border-[#8e8f8f] bg-[#f4f4f4]" />
          旋转
        </label>
        <Spin label="旋转角度" value="0.000" className="w-[68px]" />
        <span>°</span>
      </Bar>
    </div>
  );
}

const columns: [string, string][] = [
  ['', 'w-[32px]'], ['筋号', 'w-[73px]'], ['直径(mm)', 'w-[57px]'], ['级别', 'w-[35px]'], ['图号', 'w-[34px]'],
  ['图形', 'w-[200px]'], ['计算公式', 'w-[166px]'], ['公式描述', 'w-[156px]'], ['长度(mm)', 'w-[61px]'], ['根数', 'w-[38px]'],
  ['搭接', 'w-[39px]'], ['损耗(%)', 'w-[49px]'], ['单重(kg)', 'w-[61px]'], ['总重(kg)', 'w-[61px]'], ['钢筋归类', 'w-[71px]'],
  ['搭接形式', 'w-[75px]'], ['钢筋类型', 'w-[71px]'],
];

const shapeText = "font-['DejaVu_Sans_Mono',monospace] text-[10px]";
const shapes = [
  <svg key="hooked" viewBox="0 0 200 33" className="block h-[33px] w-[199px]">
    <path d="M44 8V4h-3v22h119V4h-3v4" fill="none" stroke="#000" strokeWidth="2" />
    <text x="21" y="20" className={shapeText}>100</text>
    <text x="89" y="23" fill="#f00" className={shapeText}>1200</text>
    <text x="162" y="20" className={shapeText}>100</text>
  </svg>,
  <svg key="straight" viewBox="0 0 200 33" className="block h-[33px] w-[199px]">
    <path d="M41 8v14h118V8" fill="none" stroke="#000" strokeWidth="2" />
    <text x="20" y="20" className={shapeText}>120</text>
    <text x="88" y="19" fill="#f00" className={shapeText}>1200</text>
    <text x="162" y="20" className={shapeText}>120</text>
  </svg>,
  <svg key="stirrup" viewBox="0 0 200 33" className="block h-[33px] w-[199px]">
    <rect x="82" y="7" width="34" height="21" fill="none" stroke="#000" strokeWidth="2" />
    <path d="M115 8l-6 6M110 8l-7 6M115 13l-6 6" stroke="#000" strokeWidth="2" />
    <text x="55" y="22" className={shapeText}>80</text>
    <text x="83" y="25" fill="#f00" className={shapeText}>210</text>
  </svg>,
];

const rebars = [
  ['过梁上部纵筋.1', '10', 'Φ', '80', '1200+10*d+10*d+12.5*d', '净长+锚固+锚固+两倍弯钩', '1525', '2', '0', '0', '0.941', '1.882', '直筋', '绑扎', '普通钢筋'],
  ['过梁下部纵筋.1', '12', 'Φ', '64', '1200+10*d+10*d', '净长+锚固+锚固', '1440', '4', '0', '0', '1.279', '5.115', '直筋', '绑扎', '普通钢筋'],
  ['过梁箍筋.1', '6', 'Φ', '195', '2*((250-2*20)+(120-2*20))+\n2*(75+1.9*d)', '', '753', '9', '0', '0', '0.196', '1.762', '箍筋', '绑扎', '普通钢筋'],
];

function RebarTable() {
  return (
    <table className="w-[1279px] table-fixed border-collapse">
      <thead>
        <tr className="h-5">
          {columns.map(([name, width], i) => (
            <th
              key={i}
              className={clsx(
                'overflow-hidden whitespace-nowrap border-r border-b border-[#c0c0c0] p-0 font-normal leading-4',
                width,
                i === 6 ? 'bg-linear-to-b from-[#fbd9a0] to-[#f1bd62] text-[#5c1049]' : 'bg-linear-to-b from-white to-[#f0f0f0]'
              )}
            >
              <Mixed text={name} />
            </th>
          ))}
        </tr>
      </thead>
      <tbody>
        {rebars.map((row, r) => (
          <tr key={r} className="h-[34px] bg-[#ccffd9]">
            <td className={clsx('border-r border-b border-[#c0c0c0] p-0 text-center', r === 0 ? 'bg-[#fdd08a] text-[#5c1049]' : 'bg-[#f8f8f8]')}>
              <Mixed text={r === 0 ? '1*' : String(r + 1)} />
            </td>
            {[...row.slice(0, 4), null, ...row.slice(4)].map((cell, c) => (
              <td
                key={c}
                className={clsx(
                  'overflow-hidden border-r border-b border-[#c0c0c0] p-0 leading-3',
                  c !== 4 && 'pl-0.5',
                  c === 0 && 'border-r-black pr-2',
                  c === 2 && 'text-center',
                  c === 5 && 'whitespace-pre',
                  c === 5 && r === 0 && 'bg-[#b4efdf]'
                )}
              >
                {cell === null ? shapes[r] : <Mixed text={cell} />}
              </td>
            ))}
          </tr>
        ))}
        <tr className="h-[19px]">
          {columns.map((_, i) => (
            <td key={i} className={clsx('border-r border-b border-[#c0c0c0] p-0 text-center leading-4', i === 0 && 'bg-[#f8f8f8]', i === 1 && 'border-r-black')}>
              {i === 0 && <Mixed text="4" />}
            </td>
          ))}
        </tr>
      </tbody>
    </table>
  );
}

function RebarPanel() {
  return (
    <div className="flex h-[200px] shrink-0">
      <div className="w-3 shrink-0 bg-[radial-gradient(#b5b5b5_1px,transparent_1px)] bg-size-[5px_5px]">
        <button aria-label="关闭编辑钢筋" className="block bg-[#efefef]"><Icon name="point" className="size-3" /></button>
      </div>
      <div className="flex min-w-0 flex-1 flex-col">
        <Bar className="h-[26px] gap-1.5 self-auto pl-1">
          <div className="flex gap-2">
            <Tool icon="firstG" disabled />
            <Tool icon="prevG" disabled />
            <Tool icon="next" />
            <Tool icon="last" />
          </div>
          <Sep />
          <Tool icon="upG" disabled />
          <Tool icon="down" />
          <Sep />
          <Tool icon="insert" label="插入" disabled />
          <Tool icon="remove" label="删除" disabled />
          <Tool icon="scaleBar" label="缩尺配筋" />
          <Tool icon="info" label="钢筋信息" />
          <Tool icon="library" label="钢筋图库" />
          <Tool icon="other" label="其他" menu />
          <button>关闭</button>
          <Sep />
          <span>单构件钢筋总重(kg)：8.759</span>
        </Bar>
        <div className="min-h-0 flex-1 border border-[#a0a0a8] bg-white pl-px">
          <RebarTable />
        </div>
      </div>
    </div>
  );
}

interface Prop {
  no: number;
  name: string;
  value?: string;
  tone?: 'blue' | 'gray';
  child?: boolean;
  fold?: '+' | '-';
}

const props: Prop[] = [
  { no: 1, name: '名称', value: 'GL-1200' },
  { no: 2, name: '截面宽度(mm)', value: '250' },
  { no: 3, name: '截面高度(mm)', value: '120' },
  { no: 4, name: '全部纵筋', tone: 'gray' },
  { no: 5, name: '上部纵筋', value: '2Φ10', tone: 'blue' },
  { no: 6, name: '下部纵筋', value: '4Φ12', tone: 'blue' },
  { no: 7, name: '箍筋', value: ' Φ6@150(2)', tone: 'blue' },
  { no: 8, name: '肢数', value: '2', tone: 'blue' },
  { no: 9, name: '备注' },
  { no: 10, name: '其它属性', tone: 'gray', fold: '-' },
  { no: 11, name: '其它箍筋', tone: 'blue', child: true },
  { no: 12, name: '侧面纵筋(总配', tone: 'blue', child: true },
  { no: 13, name: '拉筋', tone: 'blue', child: true },
  { no: 14, name: '汇总信息', value: '过梁', child: true },
  { no: 15, name: '保护层厚度(mm)', value: '(20)', child: true },
  { no: 16, name: '起点伸入墙内长', value: '250', child: true },
  { no: 17, name: '终点伸入墙内长', value: '250', child: true },
  { no: 18, name: '位置', value: '洞口上方', child: true },
  { no: 19, name: '计算设置', value: '按默认计算设置计算', child: true },
  { no: 20, name: '搭接设置', value: '按默认搭接设置计算', child: true },
  { no: 21, name: '顶标高(m)', value: '洞口顶标高加过梁高', child: true },
  { no: 22, name: '锚固搭接', tone: 'gray', fold: '+' },
  { no: 37, name: '显示样式', tone: 'gray', fold: '+' },
];

function PropertyPanel() {
  return (
    <aside className="flex w-[264px] shrink-0 flex-col">
      <PanelTitle title="属性编辑器" />
      <div className="mt-px min-h-0 flex-1 border border-[#a0a0a8] bg-white p-px">
        <table className="w-[258px] table-fixed border-collapse">
          <thead>
            <tr className="h-[22px]">
              <th className="w-[21px] border-r border-b border-[#c0c0c0] bg-[#f6f6f6] p-0" />
              <th className="w-[121px] border-r border-b border-[#c0c0c0] bg-linear-to-b from-white to-[#f0f0f0] p-0 font-normal">属性名称</th>
              <th className="border-r border-b border-[#c0c0c0] bg-linear-to-b from-[#fbd9a0] to-[#f1bd62] p-0 font-normal text-[#5c1049]">属性值</th>
            </tr>
          </thead>
          <tbody>
            {props.map((p) => {
              const selected = p.no === 1;
              return (
                <tr key={p.no} className="h-[19px]">
                  <td className={clsx('border-r border-b border-[#c0c0c0] p-0 text-center leading-4', selected ? 'bg-[#fdd08a] text-[#5c1049]' : 'bg-[#f8f8f8]')}>
                    <Mixed text={String(p.no)} />
                  </td>
                  <td
                    className={clsx(
                      'overflow-hidden whitespace-nowrap border-r border-b border-[#c0c0c0] p-0 leading-4',
                      selected && 'bg-[#3399ff] text-white',
                      p.tone === 'blue' && 'text-[#0000f0]',
                      p.tone === 'gray' && 'text-[#8c8c8c]'
                    )}
                  >
                    <div className="flex h-[18px] items-center">
                      {p.child ? (
                        <span className="ml-[9px] flex h-full w-[21px] shrink-0 flex-col">
                          <span className="h-1/2 w-4 border-b border-l border-[#b8b8b8]" />
                          {p.no !== 21 && <span className="h-1/2 w-4 border-l border-[#b8b8b8]" />}
                        </span>
                      ) : (
                        <span className="flex w-5 shrink-0 pl-[3px]">
                          {p.fold && (
                            <button aria-label={p.fold === '+' ? '展开' : '折叠'} className="flex size-3 items-center justify-center border border-[#b0b0b0] text-black">
                              <svg viewBox="0 0 8 8" className="size-2"><path d={p.fold === '+' ? 'M0 4h8M4 0v8' : 'M0 4h8'} stroke="#000" strokeWidth="1.200" /></svg>
                            </button>
                          )}
                        </span>
                      )}
                      <span><Mixed text={p.name} /></span>
                    </div>
                  </td>
                  <td className={clsx('overflow-hidden whitespace-pre border-r border-b border-[#c0c0c0] p-0 pl-0.5 leading-4', selected && 'bg-[#ddeeff]')}>
                    {p.value && <Mixed text={p.value} />}
                  </td>
                </tr>
              );
            })}
          </tbody>
        </table>
      </div>
    </aside>
  );
}

function ImeBar() {
  return (
    <div className="absolute top-[904px] right-0 flex items-center text-[#1c74cf]">
      <svg viewBox="0 0 28 28" className="z-10 -mr-2 size-7" aria-label="输入法">
        <path d="M1 5L22 0l6 22-19 6-4-2z" fill="#f2541b" />
        <path d="M21 7C13 4 7 7 8 10.500c1 4 13 1.500 13 6.500 0 4-8 4.500-13 2" fill="none" stroke="#fff" strokeWidth="3.200" />
      </svg>
      <div className="flex h-6 items-center gap-1.5 border border-r-0 border-[#a9bdd4] bg-[#fcfdff] pr-1 pl-3.5 shadow">
        <span className="text-[15px] leading-5 font-bold">中</span>
        <span className="w-4 text-center leading-4 font-bold">°,</span>
        <Smile className="size-4" />
        <svg viewBox="0 0 16 16" className="size-4">
          <rect x="5" y="0" width="6" height="10" rx="3" fill="currentColor" />
          <path d="M2.500 7c0 7 11 7 11 0M8 12v3M5 15h6" fill="none" stroke="currentColor" strokeWidth="1.800" />
        </svg>
        <Keyboard className="size-4" />
        <svg viewBox="0 0 16 16" className="size-4"><circle cx="7" cy="4" r="3.500" fill="#b5c0d8" /><path d="M1 15c0-8 12-8 12 0z" fill="#b5c0d8" /><rect x="8.500" y="9.500" width="6" height="6" fill="#fff" stroke="#9aa7c4" /></svg>
        <Shirt className="size-4" fill="currentColor" />
        <Wrench className="size-4" fill="currentColor" />
      </div>
    </div>
  );
}

function TitleBar() {
  return (
    <header className="flex h-[22px] shrink-0 items-start border-b border-[#1d2733] bg-[linear-gradient(90deg,#9fb0c2_0,#a9b9ca_420px,#5f748e_500px,#6d8db5_560px,#7ea3cf_740px,#86a9d6_900px,#46576d_970px,#3f4f65_1200px,#3a4960_1400px,#44546a_100%)]">
      <h1 className="flex flex-1 items-center gap-1.5 pt-px leading-[19px] text-black">
        <Icon name="app" />
        广联达BIM钢筋算量软件 GGJ2013 - [D:\图纸\广联达大厦图纸\广联达大厦.GGJ12]
      </h1>
      <div className="z-10 mr-[207px] -mb-1 flex h-[19px] w-[38px] items-center justify-center rounded-b-full border-2 border-t-0 border-[#dfe8e0] bg-[#3fca62] text-[11px] leading-3 font-bold text-white shadow-md">37</div>
      <div className="mr-0.5 flex h-[17px] overflow-hidden rounded-b-sm border border-t-0 border-[#c5ccd6]">
        <button aria-label="最小化" className="flex w-7 items-center justify-center border-r border-[#c5ccd6] bg-[#6c7a8c]"><span className="mt-1 h-[3px] w-2.5 bg-white" /></button>
        <button aria-label="还原" className="flex w-7 items-center justify-center border-r border-[#c5ccd6] bg-[#6c7a8c]"><span className="h-2.5 w-2 border-2 border-white" /></button>
        <button aria-label="关闭" className="flex w-[47px] items-center justify-center bg-linear-to-b from-[#d8806f] to-[#c03a20]">
          <svg viewBox="0 0 10 10" className="size-2.5"><path d="M1 1l8 8M9 1L1 9" stroke="#fff" strokeWidth="2.600" /></svg>
        </button>
      </div>
    </header>
  );
}

export default function App() {
  return (
    <div className="relative flex h-screen flex-col overflow-hidden bg-[#efefef] font-['Open_Sans','Noto_Sans_CJK_SC',sans-serif] text-[12px] leading-4 text-black">
      <TitleBar />

      <div className="flex h-7 shrink-0 items-center pl-[7px]">
        <div className="flex items-center gap-[11px] whitespace-nowrap">
          {menus.map((m) => <button key={m}>{m}</button>)}
        </div>
        <div className="ml-3.5 flex gap-1.5">
          <Tool icon="change" label="新建变更" menu />
          <Tool icon="robot" label="广小二" />
        </div>
        <span className="mr-1.5 ml-auto h-6 w-6 bg-linear-to-r from-white to-[#f0f0f0]" />
        <Bar className="gap-2 pr-1.5 pl-0.5">
          <Tool icon="user" label="登录" />
          <span>造价豆:0</span>
          <Tool icon="bell" />
          <Tool icon="chat" label="我要建议" />
        </Bar>
      </div>

      <div className="flex h-[30px] shrink-0 gap-1 pb-0.5">
        <Bar className="gap-2 pl-1">
          <Tool icon="newdoc" />
          <Tool icon="open" menu />
          <Tool icon="save" />
          <Sep />
          <Tool icon="undo" menu />
          <Tool icon="redo" menu disabled />
        </Bar>
        <Bar className="gap-[7px] pr-1.5 pl-0.5">
          <Tool icon="define" label="定义" />
          <Tool icon="sigma" label="汇总计算" />
          <Tool icon="cloud" label="云检查" />
          <Tool icon="levelTop" label="平齐板顶" disabled />
          <Tool icon="find" label="查找图元" />
          <Tool icon="glasses" label="查看钢筋量" />
          <Tool icon="batch" label="批量选择" />
          <Tool icon="rebar3d" label="钢筋三维" disabled />
          <Tool icon="lock" label="锁定" />
          <Tool icon="unlock" label="解锁" />
          <Tool icon="brush" label="批量删除未使用构件" />
        </Bar>
        <Bar className="gap-1.5 pr-1.5 pl-0.5">
          <Tool icon="flat" label="二维" menu />
          <Tool icon="cube" label="俯视" menu />
          <Tool icon="orbit" label="动态观察" />
          <Tool icon="local3d" label="局部三维" />
          <Sep />
          <Tool icon="full" label="全屏" />
          <Tool icon="zoom" label="缩放" menu />
          <Tool icon="pan" label="平移" menu />
          <Tool icon="rotateView" label="屏幕旋转" menu />
          <Sep />
          <Tool icon="floors" label="选择楼层" />
          <Tool icon="wire" label="线框" />
        </Bar>
      </div>

      <main className="flex min-h-0 flex-1">
        <NavPanel />
        <div className="w-[5px] shrink-0" />
        <ComponentPanels />
        <div className="w-[3px] shrink-0" />
        <section className="flex min-w-0 flex-1 flex-col">
          <DrawToolbars />
          <Canvas />
          <SnapToolbar />
          <RebarPanel />
        </section>
        <div className="w-[3px] shrink-0" />
        <PropertyPanel />
      </main>

      <footer className="mt-0.5 flex h-[21px] shrink-0 gap-0.5 leading-[19px] whitespace-nowrap *:border *:border-[#d0d0d0] *:bg-[#f6f6f6] *:pl-px">
        <span className="w-[148px]"><Mixed text="X=39365 Y=22973" /></span>
        <span className="w-[78px]"><Mixed text="层高:3.9m" /></span>
        <span className="w-[99px]"><Mixed text="底标高:3.8m" /></span>
        <span className="w-[48px]"><Mixed text="1(28)" /></span>
        <span className="flex-1"><Mixed text="按鼠标左键指定第一个角点，或拾取构件图元" /></span>
        <span className="w-[70px]"><Mixed text="1591 FPS" /></span>
      </footer>
      <div className="flex h-[7px] shrink-0 items-end overflow-hidden border-t border-[#8fa3ad] bg-[linear-gradient(90deg,#46524c,#23292b_20%,#2b3140_60%,#4d5c5e_80%,#15181c)]">
        <span className="ml-[14px] h-[5px] w-[26px] rounded-t-full bg-[#b9d2e4]" />
        <span className="ml-[34px] h-[5px] w-[30px] rounded-t bg-[#e02409]" />
        <span className="ml-[31px] h-[5px] w-8 bg-[#6cc5f8]" />
        <span className="ml-[95px] h-[3px] w-[14px] bg-[#c9b07a]" />
        <span className="ml-[33px] flex h-full w-[158px] items-end border-x border-[#dfe5e5] bg-[#8c9a92] pl-3"><span className="h-1 w-6 rounded-t bg-[#c43cf0]" /></span>
        <span className="ml-1 flex h-full w-[158px] items-end border-x border-white bg-[#c3c8ce] pl-2.5"><span className="h-1 w-[30px] rounded-t-full bg-[#1590f5]" /></span>
      </div>

      <ImeBar />
    </div>
  );
}
